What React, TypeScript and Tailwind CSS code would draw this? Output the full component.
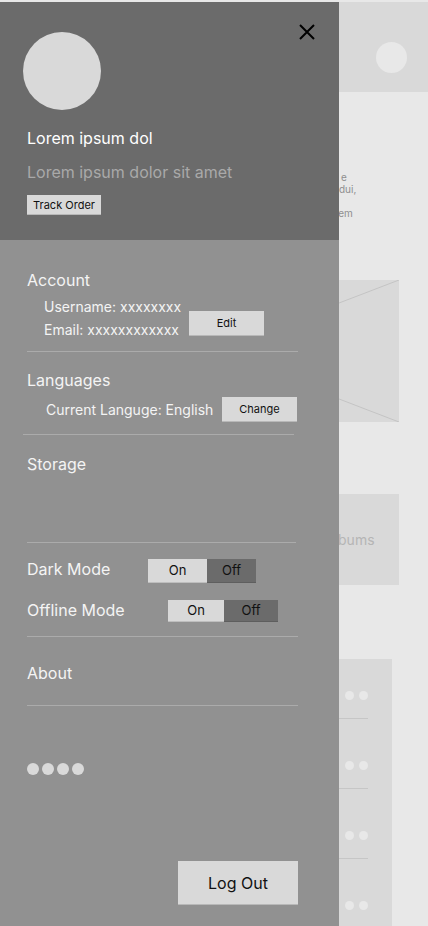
import React from "react";

function CloseIcon() {
  return (
    <svg width="16" height="16" viewBox="0 0 16 16" fill="none">
      <path d="M1 1L15 15M15 1L1 15" stroke="#000" strokeWidth="2" />
    </svg>
  );
}

function Toggle({ onW, offW, h }: { onW: string; offW: string; h: string }) {
  return (
    <div className={`flex ${h} text-[13px] text-[#111]`}>
      <div className={`${onW} flex items-center justify-center bg-[#d9d9d9] shadow-[inset_0_-1px_0_rgba(0,0,0,0.12)]`}>On</div>
      <div className={`${offW} flex items-center justify-center bg-[#6b6b6b] shadow-[inset_0_-1px_0_rgba(0,0,0,0.12)]`}>Off</div>
    </div>
  );
}

function ListRow({ h }: { h: string }) {
  return (
    <div className={`${h} mr-[24px] flex items-end justify-end gap-[5px] pb-[18px] border-b border-[#c6c6c6]`}>
      <div className="w-[9px] h-[9px] rounded-full bg-[#e8e8e8]" />
      <div className="w-[9px] h-[9px] rounded-full bg-[#e8e8e8]" />
    </div>
  );
}

export default function App() {
  return (
    <div
      className="relative w-[428px] h-[926px] overflow-hidden bg-[#e8e8e8]"
      style={{ fontFamily: "Inter, 'Noto Sans', sans-serif" }}
    >
      {/* background page */}
      <div className="pt-[2px] flex flex-col">
        <div className="h-[90px] bg-[#d9d9d9] flex justify-end pt-[40px] pr-[21px]">
          <div className="w-[31px] h-[31px] rounded-full bg-[#e8e8e8]" />
        </div>
        <div className="mt-[79px] text-[10px] leading-[12px] text-[#8f8f8f]">
          <div className="h-[12px] pl-[341px] overflow-hidden">e</div>
          <div className="h-[12px] pl-[339px] overflow-hidden">dui,</div>
          <div className="h-[12px]" />
          <div className="h-[12px] pl-[335px] overflow-hidden">tem</div>
        </div>
        <div className="mt-[61px] mx-[29px] h-[142px] bg-[#d9d9d9]">
          <svg width="370" height="142" viewBox="0 0 370 142" className="block">
            <line x1="0" y1="0" x2="370" y2="142" stroke="#c4c4c4" strokeWidth="1" />
            <line x1="370" y1="0" x2="0" y2="142" stroke="#c4c4c4" strokeWidth="1" />
          </svg>
        </div>
        <div className="mt-[72px] mx-[29px] h-[91px] bg-[#d9d9d9] flex items-center pl-[296px] text-[14px] text-[#b5b5b5]">
          Albums
        </div>
        <div className="mt-[74px] mx-[36px] h-[300px] bg-[#d9d9d9] flex flex-col">
          <ListRow h="h-[60px]" />
          <ListRow h="h-[70px]" />
          <ListRow h="h-[70px]" />
          <ListRow h="h-[70px]" />
        </div>
      </div>

      {/* drawer */}
      <div className="absolute left-0 top-[2px] w-[339px] h-[924px] flex flex-col">
        <div className="relative h-[238px] bg-[#6b6b6b] pl-[23px] pt-[30px]">
          <button className="absolute top-[22px] right-[24px]">
            <CloseIcon />
          </button>
          <div className="w-[78px] h-[78px] rounded-full bg-[#d9d9d9]" />
          <div className="mt-[18px] pl-[4px] text-[16px] leading-[20px] text-white">Lorem ipsum dol</div>
          <div className="mt-[14px] pl-[4px] text-[16px] leading-[20px] text-[#a9a9a9]">Lorem ipsum dolor sit amet</div>
          <div className="mt-[13px] ml-[4px] w-[74px] h-[20px] bg-[#d9d9d9] flex items-center justify-center text-[11px] text-[#111] shadow-[inset_0_-1px_0_rgba(0,0,0,0.15)]">
            Track Order
          </div>
        </div>

        <div className="flex-1 bg-[#919191] flex flex-col pt-[30px] text-white">
          <div className="pl-[27px] text-[16px] leading-[20px] text-[#f4f4f4]">Account</div>
          <div className="mt-[7px] flex items-start">
            <div className="w-[189px] pl-[44px] text-[14px] leading-[20px] text-[#f4f4f4] flex flex-col gap-[3px]">
              <div>Username: xxxxxxxx</div>
              <div>Email: xxxxxxxxxxxx</div>
            </div>
            <div className="mt-[14px] w-[75px] h-[25px] bg-[#d9d9d9] flex items-center justify-center text-[11px] text-[#111] shadow-[inset_0_-1px_0_rgba(0,0,0,0.15)]">
              Edit
            </div>
          </div>
          <div className="mt-[11px] ml-[27px] w-[271px] h-px bg-[#ababab]" />

          <div className="mt-[18px] pl-[27px] text-[16px] leading-[20px] text-[#f4f4f4]">Languages</div>
          <div className="mt-[7px] flex items-center h-[25px]">
            <div className="w-[222px] pl-[46px] text-[14px] leading-[20px] text-[#f4f4f4]">Current Languge: English</div>
            <div className="w-[75px] h-[25px] bg-[#d9d9d9] flex items-center justify-center text-[11px] text-[#111] shadow-[inset_0_-1px_0_rgba(0,0,0,0.15)]">
              Change
            </div>
          </div>
          <div className="mt-[12px] ml-[23px] w-[271px] h-px bg-[#ababab]" />

          <div className="mt-[19px] pl-[27px] text-[16px] leading-[20px] text-[#f4f4f4]">Storage</div>
          <div className="mt-[68px] ml-[27px] w-[269px] h-px bg-[#ababab]" />

          <div className="mt-[16px] flex items-start">
            <div className="w-[148px] pl-[27px] text-[16px] leading-[20px] text-[#f4f4f4]">Dark Mode</div>
            <Toggle onW="w-[59px]" offW="w-[49px]" h="h-[24px]" />
          </div>
          <div className="mt-[17px] flex items-start">
            <div className="w-[168px] pl-[27px] text-[16px] leading-[20px] text-[#f4f4f4]">Offline Mode</div>
            <Toggle onW="w-[56px]" offW="w-[54px]" h="h-[22px]" />
          </div>
          <div className="mt-[14px] ml-[27px] w-[271px] h-px bg-[#ababab]" />

          <div className="mt-[26px] pl-[27px] text-[16px] leading-[20px] text-[#f4f4f4]">About</div>
          <div className="mt-[22px] ml-[27px] w-[271px] h-px bg-[#ababab]" />

          <div className="mt-[57px] ml-[27px] flex gap-[3px]">
            <div className="w-[12px] h-[12px] rounded-full bg-[#d9d9d9]" />
            <div className="w-[12px] h-[12px] rounded-full bg-[#d9d9d9]" />
            <div className="w-[12px] h-[12px] rounded-full bg-[#d9d9d9]" />
            <div className="w-[12px] h-[12px] rounded-full bg-[#d9d9d9]" />
          </div>

          <div className="mt-auto mb-[21px] ml-[178px] w-[120px] h-[44px] bg-[#d9d9d9] flex items-center justify-center text-[16px] text-[#111] shadow-[inset_0_-1px_0_rgba(0,0,0,0.15)]">
            Log Out
          </div>
        </div>
      </div>
    </div>
  );
}
